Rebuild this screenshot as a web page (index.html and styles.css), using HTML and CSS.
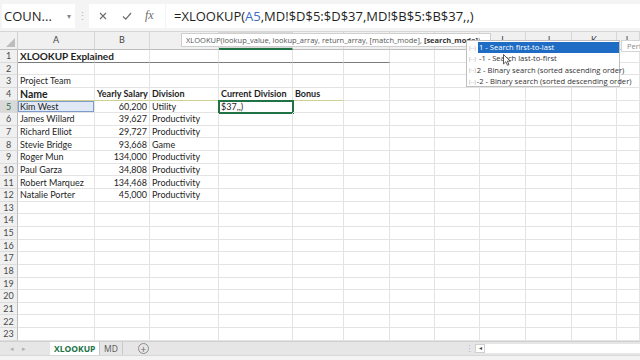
FILE: index.html
```html
<!DOCTYPE html>
<html lang="en">
<head>
    <meta charset="UTF-8">
    <meta name="viewport" content="width=device-width, initial-scale=1.0">
    <title>XLOOKUP Explained</title>
    <link rel="stylesheet" href="styles.css">
</head>
<body>

    <div class="window">
        <!-- Formula bar -->
        <div class="formula-bar">
            <div class="name-box">
                <span>COUN...</span>
                <span class="caret">&#9662;</span>
            </div>
            <div class="grip">&#8942;</div>
            <div class="bar-buttons">
                <svg class="bar-icon" viewBox="0 0 12 12" width="12" height="12">
                    <path d="M3 3 L9 9 M9 3 L3 9" stroke="#6b6b6b" stroke-width="1.1" fill="none"/>
                </svg>
                <svg class="bar-icon" viewBox="0 0 12 12" width="12" height="12">
                    <path d="M2 6.5 L4.8 9.2 L10 3" stroke="#6b6b6b" stroke-width="1.2" fill="none"/>
                </svg>
                <span class="fx">fx</span>
            </div>
            <div class="formula-input">=XLOOKUP(<span class="ref">A5</span>,MD!$D$5:$D$37,MD!$B$5:$B$37,,)</div>
        </div>

        <!-- Sheet -->
        <div class="sheet">
            <div class="col-headers">
                <div class="corner">
                    <svg viewBox="0 0 10 10" width="9" height="9">
                        <path d="M10 0 L10 10 L0 10 Z" fill="#bdbdbd"/>
                    </svg>
                </div>
                <div class="col-head">A</div>
                <div class="col-head">B</div>
                <div class="col-head">C</div>
                <div class="col-head active">D</div>
                <div class="col-head">E</div>
                <div class="col-head">F</div>
                <div class="col-head">G</div>
                <div class="col-head">H</div>
                <div class="col-head">I</div>
                <div class="col-head">J</div>
                <div class="col-head">K</div>
                <div class="col-head">L</div>
            </div>
            <div id="rows" class="rows"></div>
        </div>

        <!-- Sheet tabs -->
        <div class="tab-bar">
            <div class="tab-nav">
                <span>&#9666;</span>
                <span>&#9656;</span>
            </div>
            <div class="tab selected">XLOOKUP</div>
            <div class="tab">MD</div>
            <div class="add-sheet">+</div>
            <div class="tab-spacer"></div>
            <div class="split">&#8942;</div>
            <div class="h-scroll">
                <div class="scroll-arrow">&#9666;</div>
                <div class="scroll-track"></div>
            </div>
        </div>
        <div class="status-bar"></div>

        <!-- Formula tooltip and autocomplete -->
        <div class="arg-tip">XLOOKUP(lookup_value, lookup_array, return_array, [match_mode], <b>[search_mode]</b>)</div>
        <ul class="auto-list">
            <li class="picked"><span class="enum">(--)</span><span class="label">1 - Search first-to-last</span></li>
            <li><span class="enum">(--)</span><span class="label">-1 - Search last-to-first</span></li>
            <li><span class="enum">(--)</span><span class="label">2 - Binary search (sorted ascending order)</span></li>
            <li><span class="enum">(--)</span><span class="label">-2 - Binary search (sorted descending order)</span></li>
        </ul>
        <div class="side-tip">Perf</div>
        <svg class="pointer" viewBox="0 0 8 12" width="8" height="12">
            <path d="M0.5 0.5 L0.5 10 L2.8 7.8 L4.6 11.3 L6 10.6 L4.3 7.2 L7.3 7.2 Z" fill="#fff" stroke="#333" stroke-width="0.8"/>
        </svg>
    </div>

    <script src="script.js"></script>
</body>
</html>
```

FILE: styles.css
```css
/* Reset */
* {
    margin: 0;
    padding: 0;
    box-sizing: border-box;
}

body {
    width: 640px;
    height: 360px;
    overflow: hidden;
    background: #ffffff;
    font-family: Lato, "Liberation Sans", sans-serif;
}

.window {
    position: relative;
    width: 640px;
    height: 360px;
    display: flex;
    flex-direction: column;
}

/* Formula bar */
.formula-bar {
    display: flex;
    align-items: center;
    height: 32px;
    background: #f4f4f4;
    border-bottom: 1px solid #d6d6d6;
    font-family: "Open Sans", sans-serif;
}

.name-box {
    display: flex;
    align-items: center;
    justify-content: space-between;
    width: 73px;
    height: 24px;
    margin-left: 2px;
    padding: 0 4px 0 2px;
    background: #ffffff;
    font-size: 13px;
    color: #262626;
}

.caret {
    font-size: 8px;
    color: #8a8a8a;
}

.grip {
    width: 14px;
    text-align: center;
    font-size: 11px;
    color: #b8b8b8;
}

.bar-buttons {
    display: flex;
    align-items: center;
    gap: 12px;
    width: 76px;
    height: 24px;
    padding-left: 8px;
    background: #ffffff;
}

.fx {
    font-family: "Liberation Serif", serif;
    font-style: italic;
    font-size: 12px;
    color: #6b6b6b;
}

.formula-input {
    flex: 1;
    height: 24px;
    margin-left: 1px;
    padding-left: 8px;
    background: #ffffff;
    font-size: 13px;
    line-height: 24px;
    color: #1f1f1f;
    white-space: nowrap;
}

.formula-input .ref {
    color: #3a6fbf;
}

/* Sheet grid */
.sheet {
    display: flex;
    flex-direction: column;
}

.col-headers,
.grid-row {
    display: grid;
    grid-template-columns: 18px 77px 55px 69px 74px 51px 46px 45px 45px 46px 46px 45px 23px;
}

.col-headers {
    height: 18px;
    background: #f0f0f0;
}

.corner {
    display: flex;
    align-items: flex-end;
    justify-content: flex-end;
    padding: 0 2px 2px 0;
    border-right: 1px solid #d0d0d0;
    border-bottom: 1px solid #bdbdbd;
}

.col-head {
    border-right: 1px solid #d6d6d6;
    border-bottom: 1px solid #bdbdbd;
    text-align: center;
    font-size: 9px;
    line-height: 16px;
    color: #444444;
}

.col-head.active {
    background: #d9d9d9;
    border-bottom: 2px solid #217346;
}

.grid-row {
    height: 12.65px;
}

.row-head {
    display: flex;
    align-items: flex-end;
    justify-content: center;
    background: #f0f0f0;
    border-right: 1px solid #bdbdbd;
    border-bottom: 1px solid #dcdcdc;
    font-size: 9px;
    line-height: 10.5px;
    color: #4a4a4a;
}

.active-row .row-head {
    background: #d9d9d9;
    color: #217346;
}

.cell {
    display: flex;
    align-items: flex-end;
    padding: 0 2px;
    border-right: 1px solid #e3e3e3;
    border-bottom: 1px solid #e3e3e3;
    font-size: 9px;
    line-height: 10.5px;
    color: #1e1e1e;
    white-space: nowrap;
    min-width: 0;
}

.cell.num {
    justify-content: flex-end;
}

.title-row .cell {
    font-weight: bold;
    font-size: 10px;
    line-height: 11px;
}

.title-row .cell:nth-child(-n+7) {
    border-bottom-color: #7b7b7b;
}

.head-row .cell {
    font-weight: bold;
}

.head-row .cell:nth-child(2) {
    font-size: 10.5px;
    line-height: 11px;
}

.head-row .cell:nth-child(-n+6) {
    border-bottom-color: #cdd293;
}

.ref-cell {
    background: #dfe8f4;
    box-shadow: inset 0 0 0 1px #7e9ccb;
}

.active-cell {
    outline: 2px solid #217346;
    outline-offset: -1px;
}

/* Sheet tabs */
.tab-bar {
    display: flex;
    align-items: stretch;
    height: 14px;
    margin-top: auto;
    background: #e6e6e6;
    border-top: 1px solid #d0d0d0;
    font-family: "Open Sans", sans-serif;
}

.tab-nav {
    display: flex;
    align-items: center;
    gap: 8px;
    width: 50px;
    padding-left: 10px;
    font-size: 7px;
    color: #b0b0b0;
}

.tab {
    padding: 0 4px;
    font-size: 8.5px;
    line-height: 13px;
    color: #555555;
    border-right: 1px solid #c8c8c8;
}

.tab.selected {
    width: 50px;
    background: #ffffff;
    color: #217346;
    font-weight: bold;
    text-align: center;
}

.add-sheet {
    display: flex;
    align-items: center;
    justify-content: center;
    width: 11px;
    height: 11px;
    margin: 1px 0 0 15px;
    border: 1px solid #8c8c8c;
    border-radius: 50%;
    font-size: 10px;
    line-height: 1;
    color: #6e6e6e;
}

.tab-spacer {
    flex: 1;
}

.split {
    width: 10px;
    font-size: 9px;
    line-height: 13px;
    color: #b5b5b5;
}

.h-scroll {
    display: flex;
    align-items: center;
    width: 165px;
    padding: 2px 0;
}

.scroll-arrow {
    width: 10px;
    height: 9px;
    background: #ffffff;
    border: 1px solid #cfcfcf;
    font-size: 6px;
    line-height: 7px;
    text-align: center;
    color: #444444;
}

.scroll-track {
    flex: 1;
    height: 9px;
    background: #ffffff;
}

.status-bar {
    height: 5px;
    background: #f3f3f3;
    border-top: 1px solid #d8d8d8;
}

/* Tooltip and autocomplete */
.arg-tip {
    position: absolute;
    left: 181px;
    top: 33px;
    width: 310px;
    height: 14px;
    padding-left: 4px;
    background: #ffffff;
    border: 1px solid #cfcfcf;
    font-family: "Open Sans", sans-serif;
    font-size: 7.5px;
    line-height: 12px;
    color: #555555;
    white-space: nowrap;
    overflow: hidden;
}

.arg-tip b {
    color: #333333;
}

.auto-list {
    position: absolute;
    left: 466px;
    top: 40px;
    width: 154px;
    height: 47px;
    list-style: none;
    padding-top: 1px;
    background: #ffffff;
    border: 1px solid #bfbfbf;
    font-family: "Open Sans", sans-serif;
    font-size: 7.6px;
    color: #333333;
}

.auto-list li {
    display: flex;
    align-items: center;
    height: 11.3px;
    white-space: nowrap;
}

.enum {
    width: 11px;
    padding-left: 2px;
    font-size: 5.5px;
    color: #a5a5a5;
}

.label {
    flex: 1;
    height: 100%;
    padding-left: 1px;
    line-height: 11px;
}

.picked .label {
    background: #1f6cc4;
    color: #ffffff;
}

.side-tip {
    position: absolute;
    left: 621px;
    top: 40px;
    width: 30px;
    height: 12px;
    padding-left: 5px;
    background: #ffffff;
    border: 1px solid #d4d4d4;
    font-family: "Open Sans", sans-serif;
    font-size: 7.5px;
    line-height: 10px;
    color: #8a8a8a;
}

.pointer {
    position: absolute;
    left: 503px;
    top: 54px;
}
```

FILE: script.js
```javascript
// Worksheet contents, by row number (columns A, B, C ...)
const sheet = {
    1: ["XLOOKUP Explained"],
    3: ["Project Team"],
    4: ["Name", "Yearly Salary", "Division", "Current Division", "Bonus"],
    5: ["Kim West", "60,200", "Utility", "$37,,)"],
    6: ["James Willard", "39,627", "Productivity"],
    7: ["Richard Elliot", "29,727", "Productivity"],
    8: ["Stevie Bridge", "93,668", "Game"],
    9: ["Roger Mun", "134,000", "Productivity"],
    10: ["Paul Garza", "34,808", "Productivity"],
    11: ["Robert Marquez", "134,468", "Productivity"],
    12: ["Natalie Porter", "45,000", "Productivity"]
};

const columnCount = 12;
const rowsEl = document.getElementById("rows");

for (let r = 1; r <= 23; r++) {
    const row = document.createElement("div");
    row.className = "grid-row";
    if (r === 1) row.classList.add("title-row");
    if (r === 4) row.classList.add("head-row");
    if (r === 5) row.classList.add("active-row");

    const head = document.createElement("div");
    head.className = "row-head";
    head.textContent = r;
    row.appendChild(head);

    const values = sheet[r] || [];
    for (let c = 0; c < columnCount; c++) {
        const cell = document.createElement("div");
        const value = values[c] || "";
        cell.className = "cell";
        if (/^[\d,]+$/.test(value)) cell.classList.add("num");
        if (r === 5 && c === 0) cell.classList.add("ref-cell");
        if (r === 5 && c === 3) cell.classList.add("active-cell");
        cell.textContent = value;
        row.appendChild(cell);
    }

    rowsEl.appendChild(row);
}
```
